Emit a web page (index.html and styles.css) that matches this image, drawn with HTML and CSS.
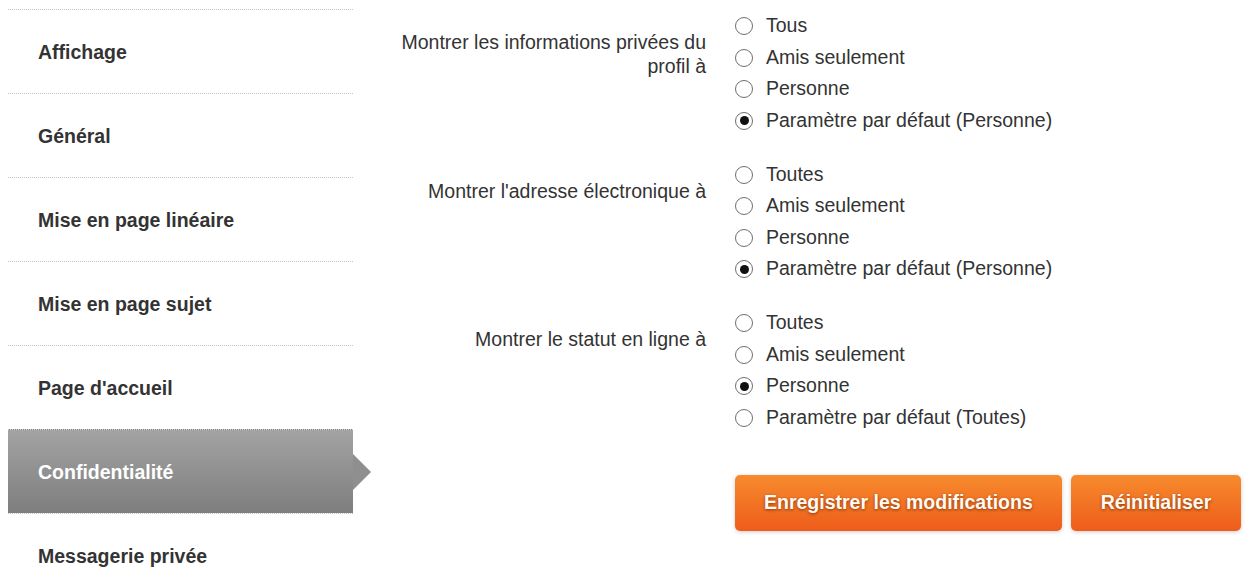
FILE: index.html
```html
<!DOCTYPE html>
<html lang="fr">
<head>
<meta charset="utf-8">
<title>Préférences</title>
<link rel="stylesheet" href="styles.css">
</head>
<body>
<div class="page">
  <nav class="sidebar">
    <a class="nav-item" href="#">Affichage</a>
    <a class="nav-item" href="#">Général</a>
    <a class="nav-item" href="#">Mise en page linéaire</a>
    <a class="nav-item" href="#">Mise en page sujet</a>
    <a class="nav-item" href="#">Page d'accueil</a>
    <a class="nav-item active" href="#">Confidentialité</a>
    <a class="nav-item" href="#">Messagerie privée</a>
  </nav>
  <form class="settings">
    <div class="group">
      <div class="label">Montrer les informations privées du profil à</div>
      <div class="options">
        <label class="opt"><input type="radio" name="g1"><span>Tous</span></label>
        <label class="opt"><input type="radio" name="g1"><span>Amis seulement</span></label>
        <label class="opt"><input type="radio" name="g1"><span>Personne</span></label>
        <label class="opt"><input type="radio" name="g1" checked><span>Paramètre par défaut (Personne)</span></label>
      </div>
    </div>
    <div class="group">
      <div class="label">Montrer l'adresse électronique à</div>
      <div class="options">
        <label class="opt"><input type="radio" name="g2"><span>Toutes</span></label>
        <label class="opt"><input type="radio" name="g2"><span>Amis seulement</span></label>
        <label class="opt"><input type="radio" name="g2"><span>Personne</span></label>
        <label class="opt"><input type="radio" name="g2" checked><span>Paramètre par défaut (Personne)</span></label>
      </div>
    </div>
    <div class="group">
      <div class="label">Montrer le statut en ligne à</div>
      <div class="options">
        <label class="opt"><input type="radio" name="g3"><span>Toutes</span></label>
        <label class="opt"><input type="radio" name="g3"><span>Amis seulement</span></label>
        <label class="opt"><input type="radio" name="g3" checked><span>Personne</span></label>
        <label class="opt"><input type="radio" name="g3"><span>Paramètre par défaut (Toutes)</span></label>
      </div>
    </div>
    <div class="actions">
      <button type="button" class="btn btn-save">Enregistrer les modifications</button>
      <button type="button" class="btn btn-reset">Réinitialiser</button>
    </div>
  </form>
</div>
</body>
</html>
```
FILE: styles.css
```css
html, body {
  margin: 0;
  padding: 0;
  background: #ffffff;
  overflow: hidden;
}
body {
  font-family: "Liberation Sans", Arial, sans-serif;
  color: #333333;
  font-size: 19.5px;
}
.page {
  display: flex;
  padding: 9px 0 0 8px;
}
.sidebar {
  width: 345px;
  flex: none;
  display: flex;
  flex-direction: column;
}
.nav-item {
  position: relative;
  display: flex;
  align-items: center;
  height: 82px;
  border-top: 1px dotted #c4c4c4;
  padding-left: 30px;
  padding-top: 1px;
  box-sizing: content-box;
  font-weight: bold;
  color: #333333;
  text-decoration: none;
}
.nav-item.active {
  background: linear-gradient(#a3a3a3, #7e7e7e);
  color: #ffffff;
  border-top-color: #dddddd;
}
.nav-item.active::after {
  content: "";
  position: absolute;
  right: -18px;
  top: 50%;
  margin-top: -18px;
  border-top: 18px solid transparent;
  border-bottom: 18px solid transparent;
  border-left: 18px solid #8f8f8f;
}
.settings {
  margin-left: 33px;
  display: flex;
  flex-direction: column;
  gap: 21.5px;
}
.group {
  display: flex;
}
.label {
  width: 320px;
  flex: none;
  text-align: right;
  line-height: 24px;
  padding-top: 21px;
  margin-right: 29px;
}
.options {
  display: flex;
  flex-direction: column;
  padding-top: 1px;
}
.opt {
  display: flex;
  align-items: center;
  height: 31.5px;
  cursor: pointer;
}
.opt input {
  appearance: none;
  -webkit-appearance: none;
  margin: 1px 13px 0 0;
  width: 18px;
  height: 18px;
  border: 1.5px solid #6e6e6e;
  border-radius: 50%;
  background: #ffffff;
  box-sizing: border-box;
  display: grid;
  place-items: center;
  flex: none;
}
.opt input:checked::before {
  content: "";
  width: 9px;
  height: 9px;
  border-radius: 50%;
  background: #111111;
}
.actions {
  display: flex;
  gap: 9px;
  margin-left: 349px;
  margin-top: 20px;
}
.btn {
  height: 56px;
  padding: 0 29px;
  border: none;
  border-radius: 5px;
  background: linear-gradient(#f78b2d, #ee5c1b);
  color: #fffaf2;
  font-family: "Liberation Sans", Arial, sans-serif;
  font-size: 19.5px;
  font-weight: bold;
  text-shadow: 0 1px 3px rgba(90, 30, 0, 0.7);
  box-shadow: 0 1px 4px rgba(0, 0, 0, 0.2);
  cursor: pointer;
}
.btn-reset {
  padding: 0 30px;
}
```
